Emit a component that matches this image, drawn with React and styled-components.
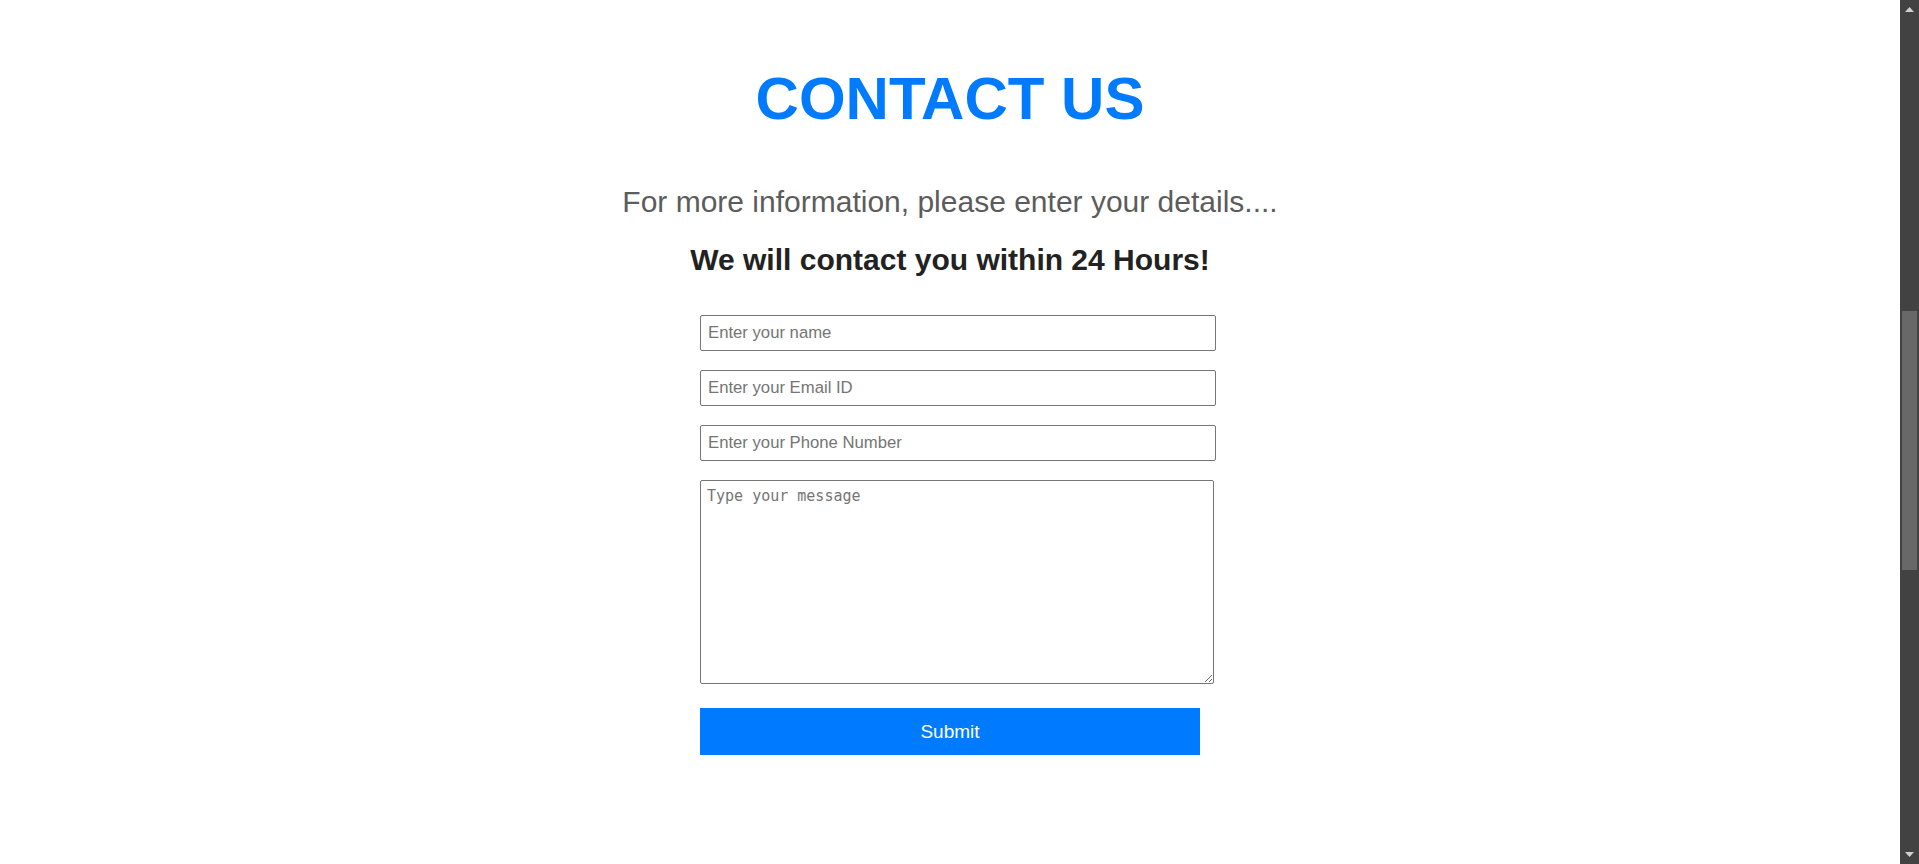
import React from "react";
import styled, { createGlobalStyle } from "styled-components";

const GlobalStyle = createGlobalStyle`
  body {
    margin: 0;
    background: #fff;
    color: #222;
    font-family: "Liberation Sans", Arial, sans-serif;
  }
`;

const Viewport = styled.div`
  display: flex;
  height: 100vh;
  overflow: hidden;
`;

const Section = styled.section`
  flex: 1;
  display: flex;
  flex-direction: column;
  align-items: center;
  padding: 64px 0 80px;
  text-align: center;
`;

const Title = styled.h1`
  margin: 0;
  font-size: 60px;
  font-weight: 700;
  color: #007bff;
`;

const Lead = styled.p`
  margin: 52px 0 0;
  font-size: 30px;
  color: #5c5c5c;
`;

const Note = styled.h3`
  margin: 24px 0 0;
  font-size: 30px;
  font-weight: 700;
  color: #222;
`;

const Form = styled.form`
  width: 500px;
  margin-top: 38px;
  display: flex;
  flex-direction: column;
  align-items: flex-start;
  gap: 19px;
`;

const Field = styled.input`
  width: 100%;
  box-sizing: content-box;
  margin: 0;
  padding: 8px 7px;
  border: 1px solid #767676;
  border-radius: 2px;
  background: #fff;
  font-family: "Liberation Sans", Arial, sans-serif;
  font-size: 16.7px;
  line-height: 18px;
  color: #222;

  &::placeholder {
    color: #757575;
  }
`;

const Message = styled.textarea`
  width: 500px;
  height: 190px;
  box-sizing: content-box;
  margin: 0 0 5px;
  padding: 6px;
  border: 1px solid #767676;
  border-radius: 2px;
  background: #fff;
  font-family: "DejaVu Sans Mono", "Liberation Mono", monospace;
  font-size: 15px;
  color: #222;
  resize: vertical;

  &::placeholder {
    color: #757575;
  }
`;

const Submit = styled.button`
  width: 500px;
  height: 47px;
  border: none;
  background: #007bff;
  color: #fff;
  font-family: "Liberation Sans", Arial, sans-serif;
  font-size: 19px;
  cursor: pointer;
`;

// page scrollbar (dark theme)
const ScrollBar = styled.aside`
  width: 19px;
  flex-shrink: 0;
  display: flex;
  flex-direction: column;
  background: #424242;
`;

const Arrow = styled.div`
  height: 19px;
  display: flex;
  align-items: center;
  justify-content: center;
  color: #d0d0d0;
`;

const Track = styled.div`
  flex: 1;
  padding: 0 2px;
`;

const Thumb = styled.div`
  margin-top: 292px;
  height: 259px;
  background: #686868;
`;

const Tri = ({ down }) => (
  <svg width="9" height="6" viewBox="0 0 9 6">
    <path d={down ? "M0 0h9L4.5 5z" : "M0 5h9L4.5 0z"} fill="currentColor" />
  </svg>
);

export default function App() {
  return (
    <>
      <GlobalStyle />
      <Viewport>
        <Section id="contact">
          <Title>CONTACT US</Title>
          <Lead>For more information, please enter your details....</Lead>
          <Note>We will contact you within 24 Hours!</Note>

          <Form onSubmit={(e) => e.preventDefault()}>
            <Field type="text" placeholder="Enter your name" />
            <Field type="email" placeholder="Enter your Email ID" />
            <Field type="tel" placeholder="Enter your Phone Number" />
            <Message placeholder="Type your message" />
            <Submit type="submit">Submit</Submit>
          </Form>
        </Section>

        <ScrollBar aria-hidden="true">
          <Arrow>
            <Tri />
          </Arrow>
          <Track>
            <Thumb />
          </Track>
          <Arrow>
            <Tri down />
          </Arrow>
        </ScrollBar>
      </Viewport>
    </>
  );
}
